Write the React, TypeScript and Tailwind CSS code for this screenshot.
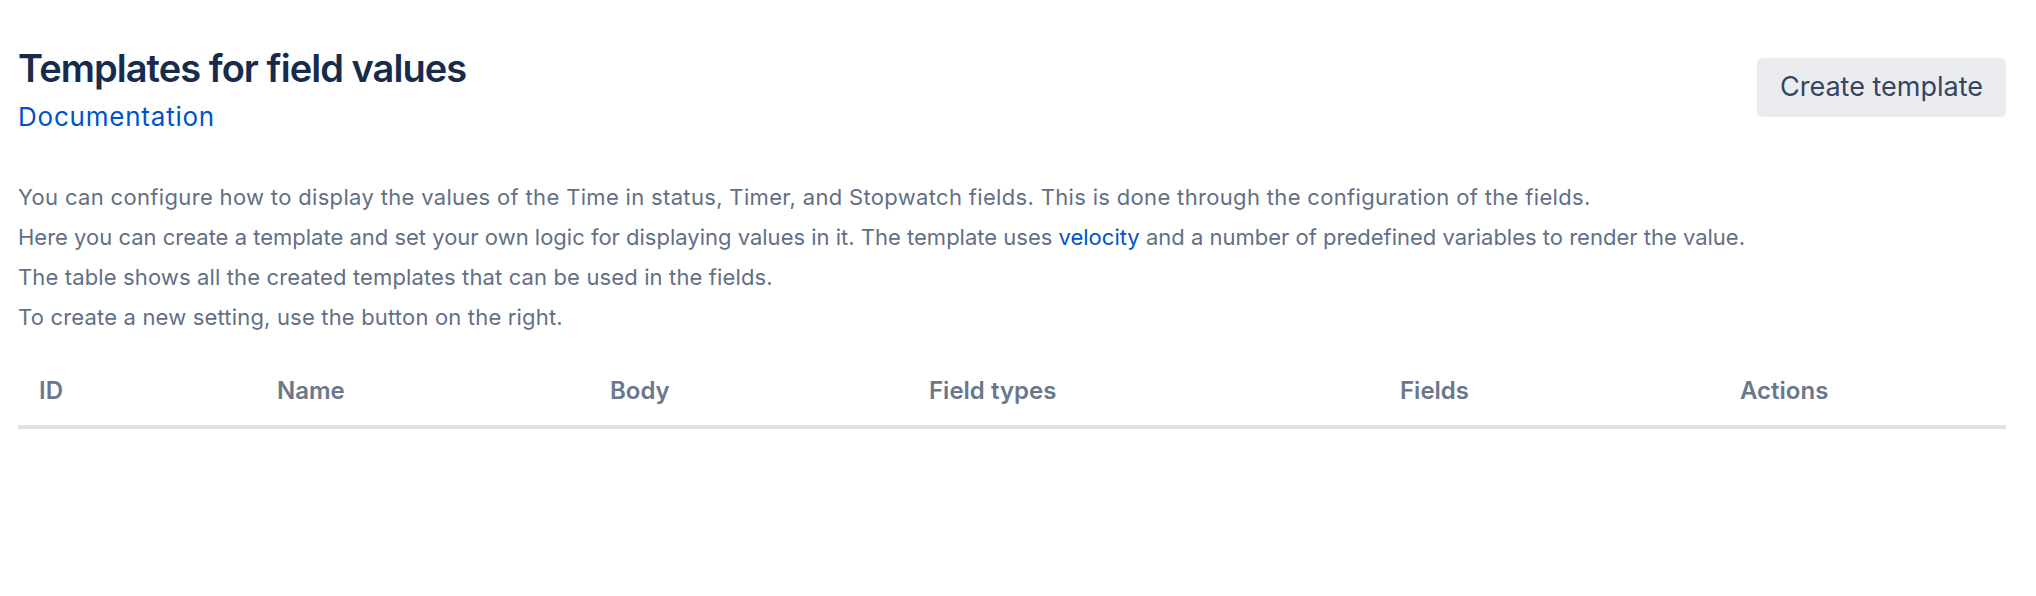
const columns = ['ID', 'Name', 'Body', 'Field types', 'Fields', 'Actions'];

export default function App() {
  return (
    <div className="min-h-screen bg-white pl-[18px] pr-[30px] pt-[45px] font-['Inter',sans-serif]">
      <div className="flex items-start justify-between">
        <div>
          <h1 className="text-[38px] leading-[46px] font-semibold text-[#172b4d] tracking-[-0.025em]">
            Templates for field values
          </h1>
          <a href="#" className="mt-[10px] block text-[26px] leading-[32px] tracking-[0.03em] text-[#0052cc]">
            Documentation
          </a>
        </div>
        <button className="mt-[13px] h-[59px] rounded-[5px] bg-[#ebecf0] px-[23px] text-[27px] text-[#344563]">
          Create template
        </button>
      </div>

      <div className="mt-[44px] text-[22px] leading-[40px] text-[#626f86]">
        <p className="tracking-[0.015em]">
          You can configure how to display the values of the Time in status, Timer, and Stopwatch fields. This is done
          through the configuration of the fields.
        </p>
        <p>
          Here you can create a template and set your own logic for displaying values in it. The template uses{' '}
          <a href="#" className="text-[#0052cc]">velocity</a> and a number of predefined variables to render the value.
        </p>
        <p className="tracking-[0.006em]">The table shows all the created templates that can be used in the fields.</p>
        <p className="tracking-[0.008em]">To create a new setting, use the button on the right.</p>
      </div>

      <div className="mt-[24px] grid grid-cols-[238px_333px_319px_471px_340px_1fr] border-b-4 border-[#dfe1e6]">
        {columns.map((col) => (
          <div key={col} className="pl-[21px] pt-[16px] pb-[20px] text-[24px] leading-[28px] font-semibold text-[#6b778c]">
            {col}
          </div>
        ))}
      </div>
    </div>
  );
}
